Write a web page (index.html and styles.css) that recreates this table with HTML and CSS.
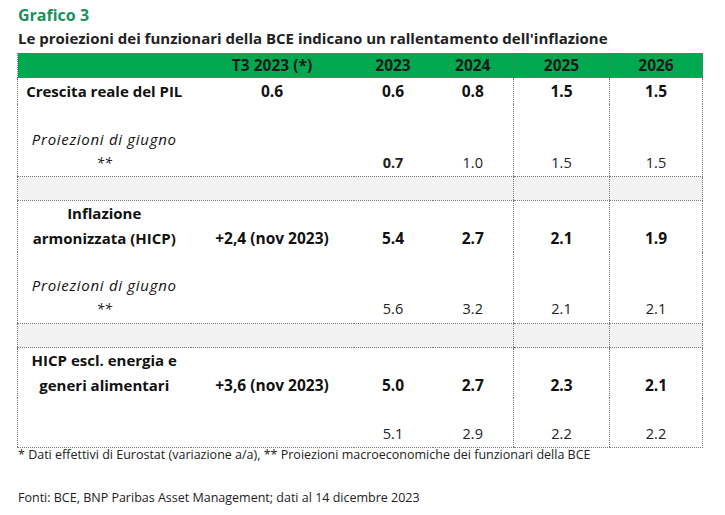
FILE: index.html
```html
<!DOCTYPE html>
<html lang="it">
<head>
<meta charset="utf-8">
<title>Grafico 3</title>
<link rel="stylesheet" href="styles.css">
</head>
<body>
<div class="page">
  <h1 class="kicker">Grafico 3</h1>
  <h2 class="title">Le proiezioni dei funzionari della BCE indicano un rallentamento dell'inflazione</h2>
  <table class="tbl">
    <colgroup>
      <col class="c-label"><col class="c-t3"><col class="c-23"><col class="c-24"><col class="c-25"><col class="c-26">
    </colgroup>
    <thead>
      <tr class="head">
        <th></th><th>T3 2023 (*)</th><th>2023</th><th>2024</th><th class="vl">2025</th><th class="vl vr">2026</th>
      </tr>
    </thead>
    <tbody>
      <tr class="main r1">
        <td class="lab">Crescita reale del PIL</td><td class="b">0.6</td><td class="b">0.6</td><td class="b">0.8</td><td class="b vl">1.5</td><td class="b vl vr">1.5</td>
      </tr>
      <tr class="proj p1">
        <td class="lab it">Proiezioni di giugno<br><span class="stars">**</span></td><td></td><td class="cal b">0.7</td><td class="cal">1.0</td><td class="cal vl">1.5</td><td class="cal vl vr">1.5</td>
      </tr>
      <tr class="gap">
        <td></td><td></td><td></td><td></td><td class="vl"></td><td class="vl vr"></td>
      </tr>
      <tr class="main r2">
        <td class="lab">Inflazione<br>armonizzata (HICP)</td><td class="b">+2,4 (nov 2023)</td><td class="b">5.4</td><td class="b">2.7</td><td class="b vl">2.1</td><td class="b vl vr">1.9</td>
      </tr>
      <tr class="proj p2">
        <td class="lab it">Proiezioni di giugno<br><span class="stars">**</span></td><td></td><td class="cal">5.6</td><td class="cal">3.2</td><td class="cal vl">2.1</td><td class="cal vl vr">2.1</td>
      </tr>
      <tr class="gap">
        <td></td><td></td><td></td><td></td><td class="vl"></td><td class="vl vr"></td>
      </tr>
      <tr class="main r3">
        <td class="lab">HICP escl. energia e<br>generi alimentari</td><td class="b">+3,6 (nov 2023)</td><td class="b">5.0</td><td class="b">2.7</td><td class="b vl">2.3</td><td class="b vl vr">2.1</td>
      </tr>
      <tr class="proj p3">
        <td class="lab"></td><td></td><td class="cal">5.1</td><td class="cal">2.9</td><td class="cal vl">2.2</td><td class="cal vl vr">2.2</td>
      </tr>
    </tbody>
  </table>
  <p class="note">* Dati effettivi di Eurostat (variazione a/a), ** Proiezioni macroeconomiche dei funzionari della BCE</p>
  <p class="source">Fonti: BCE, BNP Paribas Asset Management; dati al 14 dicembre 2023</p>
</div>
</body>
</html>
```

FILE: styles.css
```css
html, body {
  margin: 0;
  padding: 0;
  background: #ffffff;
}

body {
  font-family: "Open Sans", "Noto Sans", sans-serif;
  color: #111111;
}

.page {
  width: 725px;
  height: 515px;
  overflow: hidden;
  padding: 5px 0 0 18px;
  box-sizing: border-box;
}

.kicker {
  margin: 0;
  font-size: 16px;
  line-height: 20px;
  font-weight: 700;
  color: #17925a;
}

.title {
  margin: 3px 0 0 0;
  font-size: 15px;
  line-height: 20px;
  font-weight: 700;
  color: #222222;
}

.tbl {
  margin: 5px 0 0 -1px;
  border-collapse: collapse;
  table-layout: fixed;
  width: 685px;
  border-left: 1px dotted #7a7a7a;
}

.c-label { width: 173px; }
.c-t3 { width: 163px; }
.c-23 { width: 79px; }
.c-24 { width: 81px; }
.c-25 { width: 96px; }
.c-26 { width: 93px; }

.tbl th, .tbl td {
  box-sizing: border-box;
  padding: 0;
  text-align: center;
  vertical-align: bottom;
  font-size: 15.5px;
}

.vl { border-left: 1px dotted #7a7a7a; }
.vr { border-right: 1px dotted #7a7a7a; }

.head th {
  background: #00a94f;
  height: 25px;
  line-height: 25px;
  font-weight: 700;
  color: #1a1a1a;
  vertical-align: middle;
}

.head th.vl { border-left: 1px dotted #4d7a5d; }

.b { font-weight: 700; }

.tbl td.lab {
  font-weight: 700;
  font-size: 15px;
}

.tbl td.it {
  font-style: italic;
  font-weight: 400;
  font-size: 15px;
  letter-spacing: 0.7px;
}

.stars {
  font-size: 14px;
  letter-spacing: 0;
}

.tbl td.cal {
  font-family: "Open Sans", "Noto Sans", sans-serif;
  font-size: 14.5px;
  color: #222222;
}

.tbl td.cal.b { font-weight: 700; }

.main td { line-height: 25px; }

.r1 td { height: 26px; line-height: 24px; vertical-align: middle; }
.r2 td { height: 51px; padding-bottom: 1px; }
.r3 td { height: 50px; }

.proj td {
  line-height: 23px;
  border-bottom: 1px dotted #7a7a7a;
}

.p1 td { height: 72px; padding-bottom: 2px; }
.p2 td { height: 72px; padding-bottom: 3px; }
.p3 td { height: 49px; padding-bottom: 2px; }

.gap td {
  height: 24px;
  background: #f2f2f2;
  border-bottom: 1px dotted #7a7a7a;
}

.note {
  margin: 0;
  font-family: "Open Sans", "Noto Sans", sans-serif;
  font-size: 12.5px;
  line-height: 14px;
  color: #222222;
}

.source {
  margin: 29px 0 0 0;
  font-family: "Open Sans", "Noto Sans", sans-serif;
  font-size: 12.5px;
  line-height: 14px;
  color: #222222;
}
```
